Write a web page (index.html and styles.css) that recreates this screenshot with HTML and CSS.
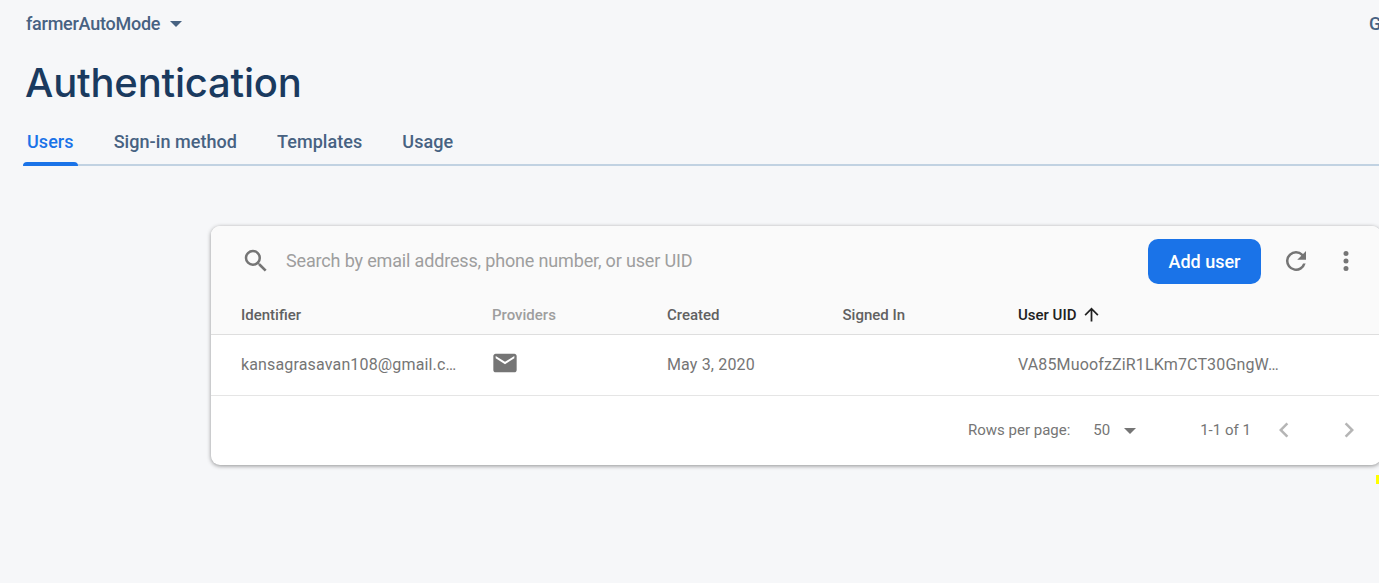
FILE: index.html
```html
<!DOCTYPE html>
<html lang="en">
<head>
<meta charset="utf-8">
<title>Authentication</title>
<link rel="stylesheet" href="styles.css">
</head>
<body>
<header class="topbar">
  <div class="project"><span class="project-name">farmerAutoMode</span><i class="caret"></i></div>
  <a class="docs">Go to docs</a>
</header>
<h1 class="title">Authentication</h1>
<nav class="tabs">
  <a class="tab active">Users</a>
  <a class="tab">Sign-in method</a>
  <a class="tab">Templates</a>
  <a class="tab">Usage</a>
</nav>
<main class="card">
  <div class="toolbar">
    <svg class="search-icon" viewBox="0 0 24 24"><path d="M15.5 14h-.79l-.28-.27A6.47 6.47 0 0 0 16 9.5 6.5 6.5 0 1 0 9.5 16c1.61 0 3.09-.59 4.23-1.57l.27.28v.79l5 4.99L20.49 19l-4.99-5zm-6 0a4.5 4.5 0 1 1 0-9 4.5 4.5 0 0 1 0 9z"/></svg>
    <span class="placeholder">Search by email address, phone number, or user UID</span>
    <button class="add">Add user</button>
    <svg class="refresh" viewBox="0 0 24 24"><path d="M17.65 6.35A7.96 7.96 0 0 0 12 4a8 8 0 1 0 7.73 10h-2.08A6 6 0 1 1 12 6c1.66 0 3.14.69 4.22 1.78L13 11h7V4l-2.35 2.35z"/></svg>
    <svg class="more" viewBox="0 0 24 24"><path d="M12 8a2 2 0 1 0 0-4 2 2 0 0 0 0 4zm0 2a2 2 0 1 0 0 4 2 2 0 0 0 0-4zm0 6a2 2 0 1 0 0 4 2 2 0 0 0 0-4z"/></svg>
  </div>
  <div class="row head">
    <span>Identifier</span><span class="muted">Providers</span><span>Created</span><span>Signed In</span>
    <span class="sorted">User UID<svg class="arrow" viewBox="0 0 24 24"><path d="M4 12l1.41 1.41L11 7.83V20h2V7.83l5.58 5.59L20 12l-8-8-8 8z"/></svg></span>
  </div>
  <div class="row body">
    <span>kansagrasavan108@gmail.c…</span>
    <svg class="mail" viewBox="0 0 24 24"><path d="M20 4H4c-1.100 0-2 .9-2 2v12c0 1.100.9 2 2 2h16c1.100 0 2-.9 2-2V6c0-1.100-.9-2-2-2zm0 4l-8 5-8-5V6l8 5 8-5v2z"/></svg>
    <span>May 3, 2020</span><span></span><span>VA85MuoofzZiR1LKm7CT30GngW…</span>
  </div>
  <footer class="pager">
    <span class="rpp">Rows per page:</span><span class="size">50</span><i class="caret grey"></i><span class="range">1-1 of 1</span>
    <svg class="chev prev" viewBox="0 0 24 24"><path d="M15.410 7.410L14 6l-6 6 6 6 1.410-1.410L10.830 12z"/></svg>
    <svg class="chev next" viewBox="0 0 24 24"><path d="M8.590 16.590L10 18l6-6-6-6-1.410 1.410L13.170 12z"/></svg>
  </footer>
</main>
<i class="marker"></i>
</body>
</html>
```
FILE: styles.css
```css
* { box-sizing: border-box; }
html, body { margin: 0; height: 100%; overflow: hidden; }
body { background: #f6f7f9; font-family: Roboto, "Liberation Sans", sans-serif; color: #476282; position: relative; }
svg { display: block; flex: none; fill: #757575; }
span { white-space: nowrap; }
.topbar { height: 48px; padding: 0 0 2px 26px; display: flex; align-items: center; font-size: 18px; font-weight: 500; }
.project { width: 1343px; flex: none; display: flex; align-items: center; gap: 10px; }
.project-name { letter-spacing: -.25px; }
.caret { border: 6px solid transparent; border-top-color: #476282; border-bottom: 0; margin-top: 1px; }
.docs { white-space: nowrap; flex: none; }
.title { margin: 0; padding-left: 25px; height: 69px; font: 500 40px/69px "Google Sans", Inter, sans-serif; letter-spacing: -.2px; color: #1a3a5f; }
.tabs { height: 49px; margin-left: 23px; border-bottom: 2px solid #c1d2e2; display: flex; gap: 32px; font-size: 18px; font-weight: 500; line-height: 50px; letter-spacing: .06px; }
.tab { height: 49px; padding: 0 4px; white-space: nowrap; }
.active { color: #1a73e8; display: flex; flex-direction: column; line-height: 50px; }
.active::after { content: ""; height: 4px; margin: -5px -4px 0; background: #1a73e8; border-radius: 4px 4px 0 0; }
.card { width: 1170px; height: 239px; margin: 60px 0 0 211px; background: #fff; border-radius: 9px; box-shadow: 0 1px 4px rgba(0,0,0,.42); overflow: hidden; }
.toolbar { height: 70px; background: #fafafa; display: flex; align-items: center; padding-left: 30px; }
.search-icon { width: 30px; height: 30px; }
.placeholder { width: 862px; margin-left: 15px; padding-bottom: 2px; font-size: 18px; letter-spacing: -.16px; color: #9e9e9e; }
.add { width: 113px; height: 45px; border: 0; border-radius: 10px; background: #1a73e8; color: #fff; font: 500 18px Roboto, sans-serif; flex: none; }
.refresh, .more { width: 30px; height: 30px; margin-left: 20px; }
.row { display: grid; grid-template-columns: 251px 175px 175.5px 175.5px 1fr; padding-left: 30px; align-items: center; }
.head { height: 39px; background: #fafafa; border-bottom: 1px solid #dedede; font-size: 15px; font-weight: 500; color: #616161; }
.muted { color: #9e9e9e; }
.sorted { color: #212121; display: flex; align-items: center; gap: 5px; }
.arrow { width: 21px; height: 21px; margin-bottom: 2px; fill: #212121; }
.body { height: 61px; padding-bottom: 2px; border-bottom: 1px solid #e5e5e5; font-size: 16px; letter-spacing: .15px; color: #757575; }
.mail { width: 28px; height: 28px; margin: 0 0 3px -1px; }
.pager { height: 69px; display: flex; align-items: center; padding: 0 0 1px 757px; font-size: 15px; color: #757575; }
.size { margin-left: 23px; }
.grey { margin-left: 14px; border-top-color: #757575; }
.range { width: 51px; margin-left: 64px; }
.chev { width: 30px; height: 30px; fill: #b5b5b5; }
.prev { margin-left: 18px; }
.next { margin-left: 35px; }
.marker { position: absolute; right: 0; top: 475px; width: 3px; height: 9px; background: #ff0; }
```
